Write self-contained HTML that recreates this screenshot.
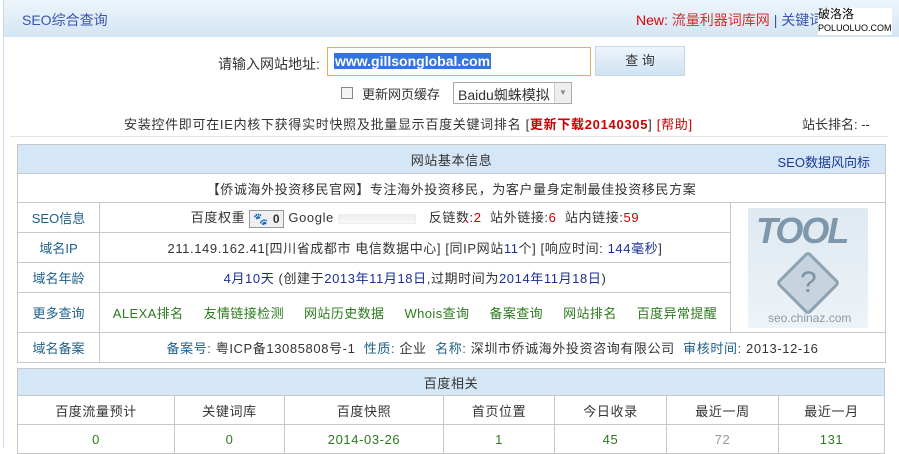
<!DOCTYPE html>
<html><head><meta charset="utf-8"><style>
*{margin:0;padding:0;box-sizing:border-box}
body{width:899px;height:448px;overflow:hidden;background:#fff;font-family:"Liberation Sans","Noto Sans CJK SC",sans-serif;font-size:13px;color:#333;position:relative}
.a{position:absolute;white-space:nowrap}
.hdr{left:3px;top:0;width:896px;height:37px;background:linear-gradient(#eef5fb,#d3e5f3);border-left:1px solid #c6dcee}
.lb{left:3px;top:37px;width:1px;height:411px;background:#c6dcee}
table{position:absolute;border-collapse:collapse;left:17px;width:868px;table-layout:fixed}
td{border:1px solid #c5c9cc;text-align:center;font-size:13px;letter-spacing:0.6px;white-space:nowrap}
.th{background:#d5e6f6;}
.lab{color:#1d5f8a;letter-spacing:0}
.g{color:#2c7a1e}
.r{color:#c00}
.b{color:#1a2f9a}
</style></head><body>
<div class="a hdr"></div><div class="a lb"></div>
<div class="a" style="left:22px;top:10px;font-size:14px;color:#3a55b0">SEO综合查询</div>
<div class="a" style="left:636px;top:10px;font-size:14px;color:#d00">New: <span style="color:#d03030">流量利器词库网</span> <span style="color:#3a55b0">| 关键词排名分析</span></div>
<div class="a" style="left:818px;top:8px;font-size:12px;color:#000;background:#fff;line-height:13px">破洛洛<br><span style="font-size:9px">POLUOLUO.COM</span></div>
<div class="a" style="left:218px;top:54px;font-size:14px;color:#333">请输入网站地址:</div>
<div class="a" style="left:327px;top:47px;width:264px;height:29px;border:1px solid #e0b060;background:#fff"></div>
<div class="a" style="left:334px;top:53px;font-size:14px;font-weight:bold;color:#fff;background:#3176d8;padding:0 1px">www.gillsonglobal.com</div>
<div class="a" style="left:595px;top:46px;width:90px;height:30px;background:linear-gradient(#eef5fb,#cfe2f2);border:1px solid #c4d8ea;text-align:center;line-height:28px;font-size:13px">查 询</div>
<div class="a" style="left:341px;top:87px;width:12px;height:12px;border:1px solid #888;background:#f4f4f4"></div>
<div class="a" style="left:362px;top:84px">更新网页缓存</div>
<div class="a" style="left:453px;top:82px;width:119px;height:22px;border:1px solid #aaa;padding:2px 4px;font-size:14px">Baidu蜘蛛模拟</div>
<div class="a" style="left:554px;top:83px;width:17px;height:20px;background:#eee;border-left:1px solid #ccc;font-size:8px;color:#888;text-align:center;line-height:20px">▼</div>
<div class="a" style="left:124px;top:114px;letter-spacing:0.7px">安装控件即可在IE内核下获得实时快照及批量显示百度关键词排名 [<b class="r">更新下载20140305</b>] <span class="r">[帮助]</span></div>
<div class="a" style="left:802px;top:114px">站长排名: --</div>
<div class="a" style="left:10px;top:136px;width:878px;height:1px;background:#e5e5e5"></div>
<table style="top:144px">
<colgroup><col style="width:82px"><col style="width:631px"><col style="width:155px"></colgroup>
<tr style="height:29px"><td colspan="3" class="th">网站基本信息<span class="a" style="left:760px;top:7px;color:#1a3a9a;letter-spacing:0">SEO数据风向标</span></td></tr>
<tr style="height:29px"><td colspan="3">【侨诚海外投资移民官网】专注海外投资移民，为客户量身定制最佳投资移民方案</td></tr>
<tr style="height:30px"><td class="lab">SEO信息</td><td>百度权重 <span style="display:inline-block;border:1px solid #999;background:#f0f0f0;padding:1px 3px;vertical-align:middle;font-size:12px"><span style="color:#2a5fd0">🐾</span> <b>0</b></span> Google <span style="display:inline-block;width:78px;height:10px;background:linear-gradient(#eee,#f8f8f8);border:1px solid #eee;vertical-align:middle"></span> &nbsp;&nbsp;反链数:<span class="r">2</span> &nbsp;站外链接:<span class="r">6</span> &nbsp;站内链接:<span class="r">59</span></td>
<td rowspan="4" style="padding:0;letter-spacing:0"><div style="margin:0 auto;width:120px;height:120px;background:linear-gradient(#dfe9f1,#edf3f7);position:relative">
<div class="a" style="left:8px;top:2px;font-size:36px;font-weight:bold;font-style:italic;color:#7f97ab;letter-spacing:-2px">TOOL</div>
<div class="a" style="left:37px;top:52px;width:46px;height:46px;transform:rotate(45deg);background:#c7d4dd;border:3px solid #8ca3b4;border-radius:4px"></div>
<div class="a" style="left:52px;top:58px;font-size:30px;color:#7b93a6">?</div>
<div class="a" style="left:20px;top:103px;font-size:12px;color:#8b9aa6">seo.chinaz.com</div></div></td></tr>
<tr style="height:30px"><td class="lab">域名IP</td><td>211.149.162.41[四川省成都市 电信数据中心] [同IP网站<span class="b">11</span>个] [响应时间: <span class="b">144毫秒</span>]</td></tr>
<tr style="height:30px"><td class="lab">域名年龄</td><td><span class="b">4月10天</span> (创建于<span class="b">2013年11月18日</span>,过期时间为<span class="b">2014年11月18日</span>)</td></tr>
<tr style="height:40px"><td class="lab">更多查询</td><td class="g" style="letter-spacing:0.4px">ALEXA排名&nbsp;&nbsp;&nbsp;&nbsp; 友情链接检测&nbsp;&nbsp;&nbsp;&nbsp; 网站历史数据&nbsp;&nbsp;&nbsp;&nbsp; Whois查询&nbsp;&nbsp;&nbsp;&nbsp; 备案查询&nbsp;&nbsp;&nbsp;&nbsp; 网站排名&nbsp;&nbsp;&nbsp;&nbsp; 百度异常提醒</td></tr>
<tr style="height:30px"><td class="lab">域名备案</td><td colspan="2"><span style="color:#1d5f8a">备案号:</span> 粤ICP备13085808号-1 &nbsp;<span style="color:#1d5f8a">性质:</span> 企业 &nbsp;<span style="color:#1d5f8a">名称:</span> 深圳市侨诚海外投资咨询有限公司 &nbsp;<span style="color:#1d5f8a">审核时间:</span> 2013-12-16</td></tr>
</table>
<table style="top:368px">
<colgroup><col style="width:157px"><col style="width:110px"><col style="width:159px"><col style="width:111px"><col style="width:112px"><col style="width:112px"><col></colgroup>
<tr style="height:27px"><td colspan="7" class="th">百度相关</td></tr>
<tr style="height:29px"><td>百度流量预计</td><td>关键词库</td><td>百度快照</td><td>首页位置</td><td>今日收录</td><td>最近一周</td><td>最近一月</td></tr>
<tr style="height:29px" class="g"><td>0</td><td>0</td><td>2014-03-26</td><td>1</td><td>45</td><td style="color:#999">72</td><td>131</td></tr>
</table>
</body></html>
